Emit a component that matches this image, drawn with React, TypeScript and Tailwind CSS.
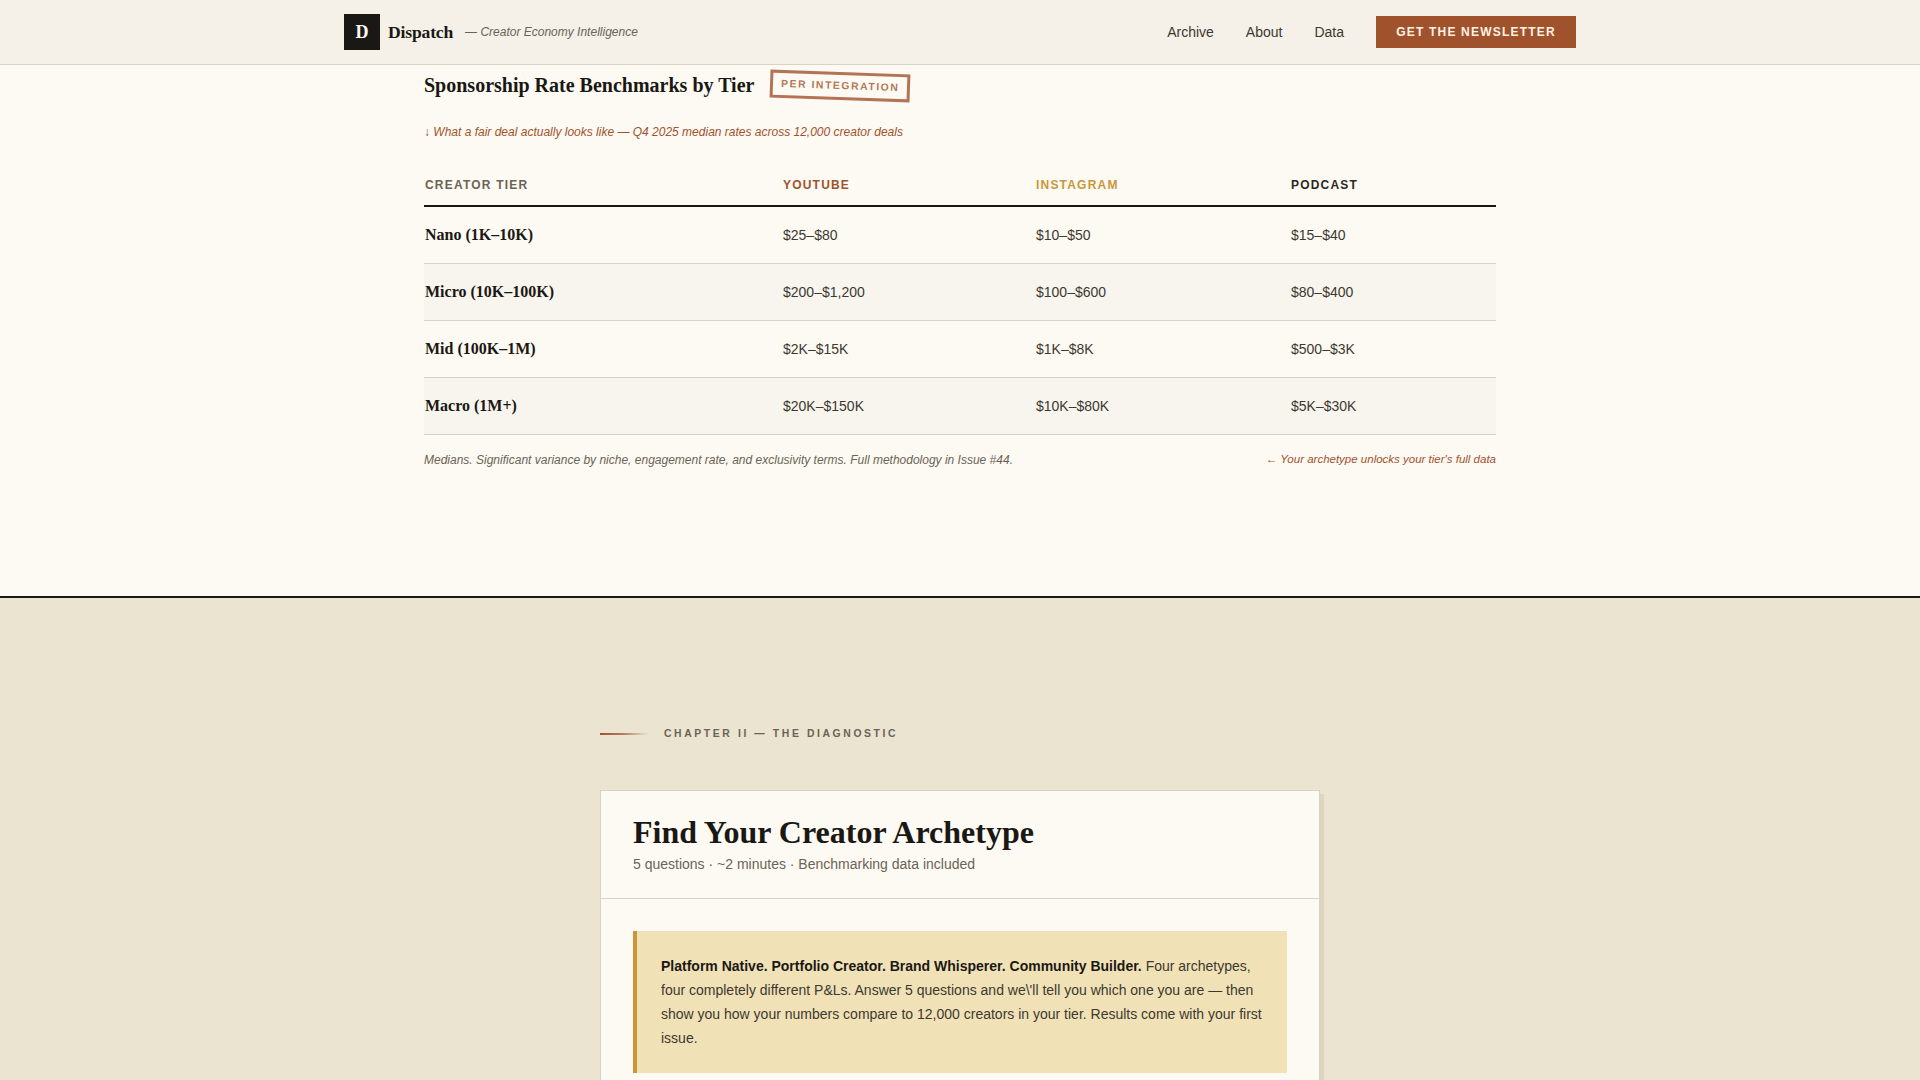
import * as React from "react";

const rows = [
  { tier: "Nano (1K–10K)", yt: "$25–$80", ig: "$10–$50", pod: "$15–$40", alt: false },
  { tier: "Micro (10K–100K)", yt: "$200–$1,200", ig: "$100–$600", pod: "$80–$400", alt: true },
  { tier: "Mid (100K–1M)", yt: "$2K–$15K", ig: "$1K–$8K", pod: "$500–$3K", alt: false },
  { tier: "Macro (1M+)", yt: "$20K–$150K", ig: "$10K–$80K", pod: "$5K–$30K", alt: true },
];

const serif = "font-['Liberation_Serif',serif]";

function Nav() {
  return (
    <nav className="h-[65px] shrink-0 border-b border-[#d9d3c3] bg-[#f5f0e8]">
      <div className="mx-auto flex h-16 max-w-[1280px] items-center justify-between px-6">
        <div className="flex items-center">
          <div className={`flex h-9 w-9 items-center justify-center bg-[#1a1814] text-lg font-bold text-[#fdfaf3] ${serif}`}>D</div>
          <span className={`ml-2 text-[17.6px] font-bold tracking-[-0.01em] text-[#1a1814] ${serif}`}>Dispatch</span>
          <span className="ml-3 text-xs italic text-[#6b6355]">— Creator Economy Intelligence</span>
        </div>
        <div className="flex items-center gap-8 text-sm text-[#3d3830]">
          <a>Archive</a>
          <a>About</a>
          <a>Data</a>
          <button className="h-8 w-[200px] bg-[#a0522d] text-xs font-bold tracking-[0.1em] text-[#fdf3e3]">GET THE NEWSLETTER</button>
        </div>
      </div>
    </nav>
  );
}

function Benchmarks() {
  return (
    <section className="h-[533px] shrink-0 border-b-2 border-[#1a1814] bg-[#fdfaf3]">
      <div className="mx-auto w-[1072px]">
        <div className="flex h-[41px] items-center">
          <h3 className={`pb-[2px] text-xl font-bold text-[#1a1814] ${serif}`}>Sponsorship Rate Benchmarks by Tier</h3>
          <span className="ml-4 rotate-[2deg] border-[3px] border-[#a0522d]/80 px-2 py-[3px] text-[10.4px] font-bold tracking-[0.15em] text-[#a0522d]/80">PER INTEGRATION</span>
        </div>
        <p className="mt-[18px] text-xs italic text-[#a0522d]">↓ What a fair deal actually looks like — Q4 2025 median rates across 12,000 creator deals</p>
        <table className="mt-6 w-full table-fixed border-collapse text-left">
          <colgroup>
            <col className="w-[359px]" />
            <col className="w-[253px]" />
            <col className="w-[255px]" />
            <col />
          </colgroup>
          <thead>
            <tr className="h-[42px] border-b-2 border-[#1a1814] text-xs font-bold tracking-[0.1em]">
              <th className="pl-px pt-px font-bold text-[#6b6355]">CREATOR TIER</th>
              <th className="pt-px font-bold text-[#a0522d]">YOUTUBE</th>
              <th className="pt-px font-bold text-[#c9973a]">INSTAGRAM</th>
              <th className="pt-px font-bold text-[#2c2820]">PODCAST</th>
            </tr>
          </thead>
          <tbody>
            {rows.map((r) => (
              <tr key={r.tier} className={`h-[57px] border-b border-[#d9d3c3] text-sm text-[#3d3830] ${r.alt ? "bg-[#f8f5ee]" : ""}`}>
                <td className={`pl-px text-base font-bold text-[#1a1814] ${serif}`}>{r.tier}</td>
                <td>{r.yt}</td>
                <td>{r.ig}</td>
                <td>{r.pod}</td>
              </tr>
            ))}
          </tbody>
        </table>
        <div className="mt-4 flex items-center justify-between">
          <p className="text-xs italic text-[#6b6355]">Medians. Significant variance by niche, engagement rate, and exclusivity terms. Full methodology in Issue #44.</p>
          <p className="pb-[2px] text-[11.5px] italic text-[#a0522d]">← Your archetype unlocks your tier's full data</p>
        </div>
      </div>
    </section>
  );
}

function Diagnostic() {
  return (
    <section className="flex-1 bg-[#ebe4d1] pt-[128px]">
      <div className="mx-auto w-[720px]">
        <div className="flex items-center">
          <div className="h-0.5 w-12 bg-gradient-to-r from-[#a0522d] via-[#a0522d]/70 to-transparent" />
          <span className="ml-4 text-[10.4px] font-bold tracking-[0.25em] text-[#6b6355]">CHAPTER II — THE DIAGNOSTIC</span>
        </div>
        <div className="mt-[48px] border border-[#d9d3c3] bg-[#fdfaf3] shadow-[4px_4px_0_#ddd5c0]">
          <div className="border-b border-[#d9d3c3] px-8 pb-6 pt-[22px]">
            <h2 className={`text-[32px] font-bold leading-[1.2] text-[#1a1814] ${serif}`}>Find Your Creator Archetype</h2>
            <p className="mt-[3px] text-sm text-[#6b6355]">5 questions · ~2 minutes · Benchmarking data included</p>
          </div>
          <div className="p-8">
            <div className="border-l-4 border-[#c9973a] bg-[#f0e2b6] px-6 py-[23px] text-sm leading-6 text-[#3d3830]">
              <strong className="font-bold text-[#1a1814]">Platform Native. Portfolio Creator. Brand Whisperer. Community Builder.</strong> Four archetypes, four completely different P&amp;Ls. Answer 5 questions and we\'ll tell you which one you are — then show you how your numbers compare to 12,000 creators in your tier. Results come with your first issue.
            </div>
          </div>
        </div>
      </div>
    </section>
  );
}

export default function App() {
  return (
    <div className="flex h-screen flex-col overflow-hidden font-['Liberation_Sans',sans-serif]">
      <Nav />
      <Benchmarks />
      <Diagnostic />
    </div>
  );
}
